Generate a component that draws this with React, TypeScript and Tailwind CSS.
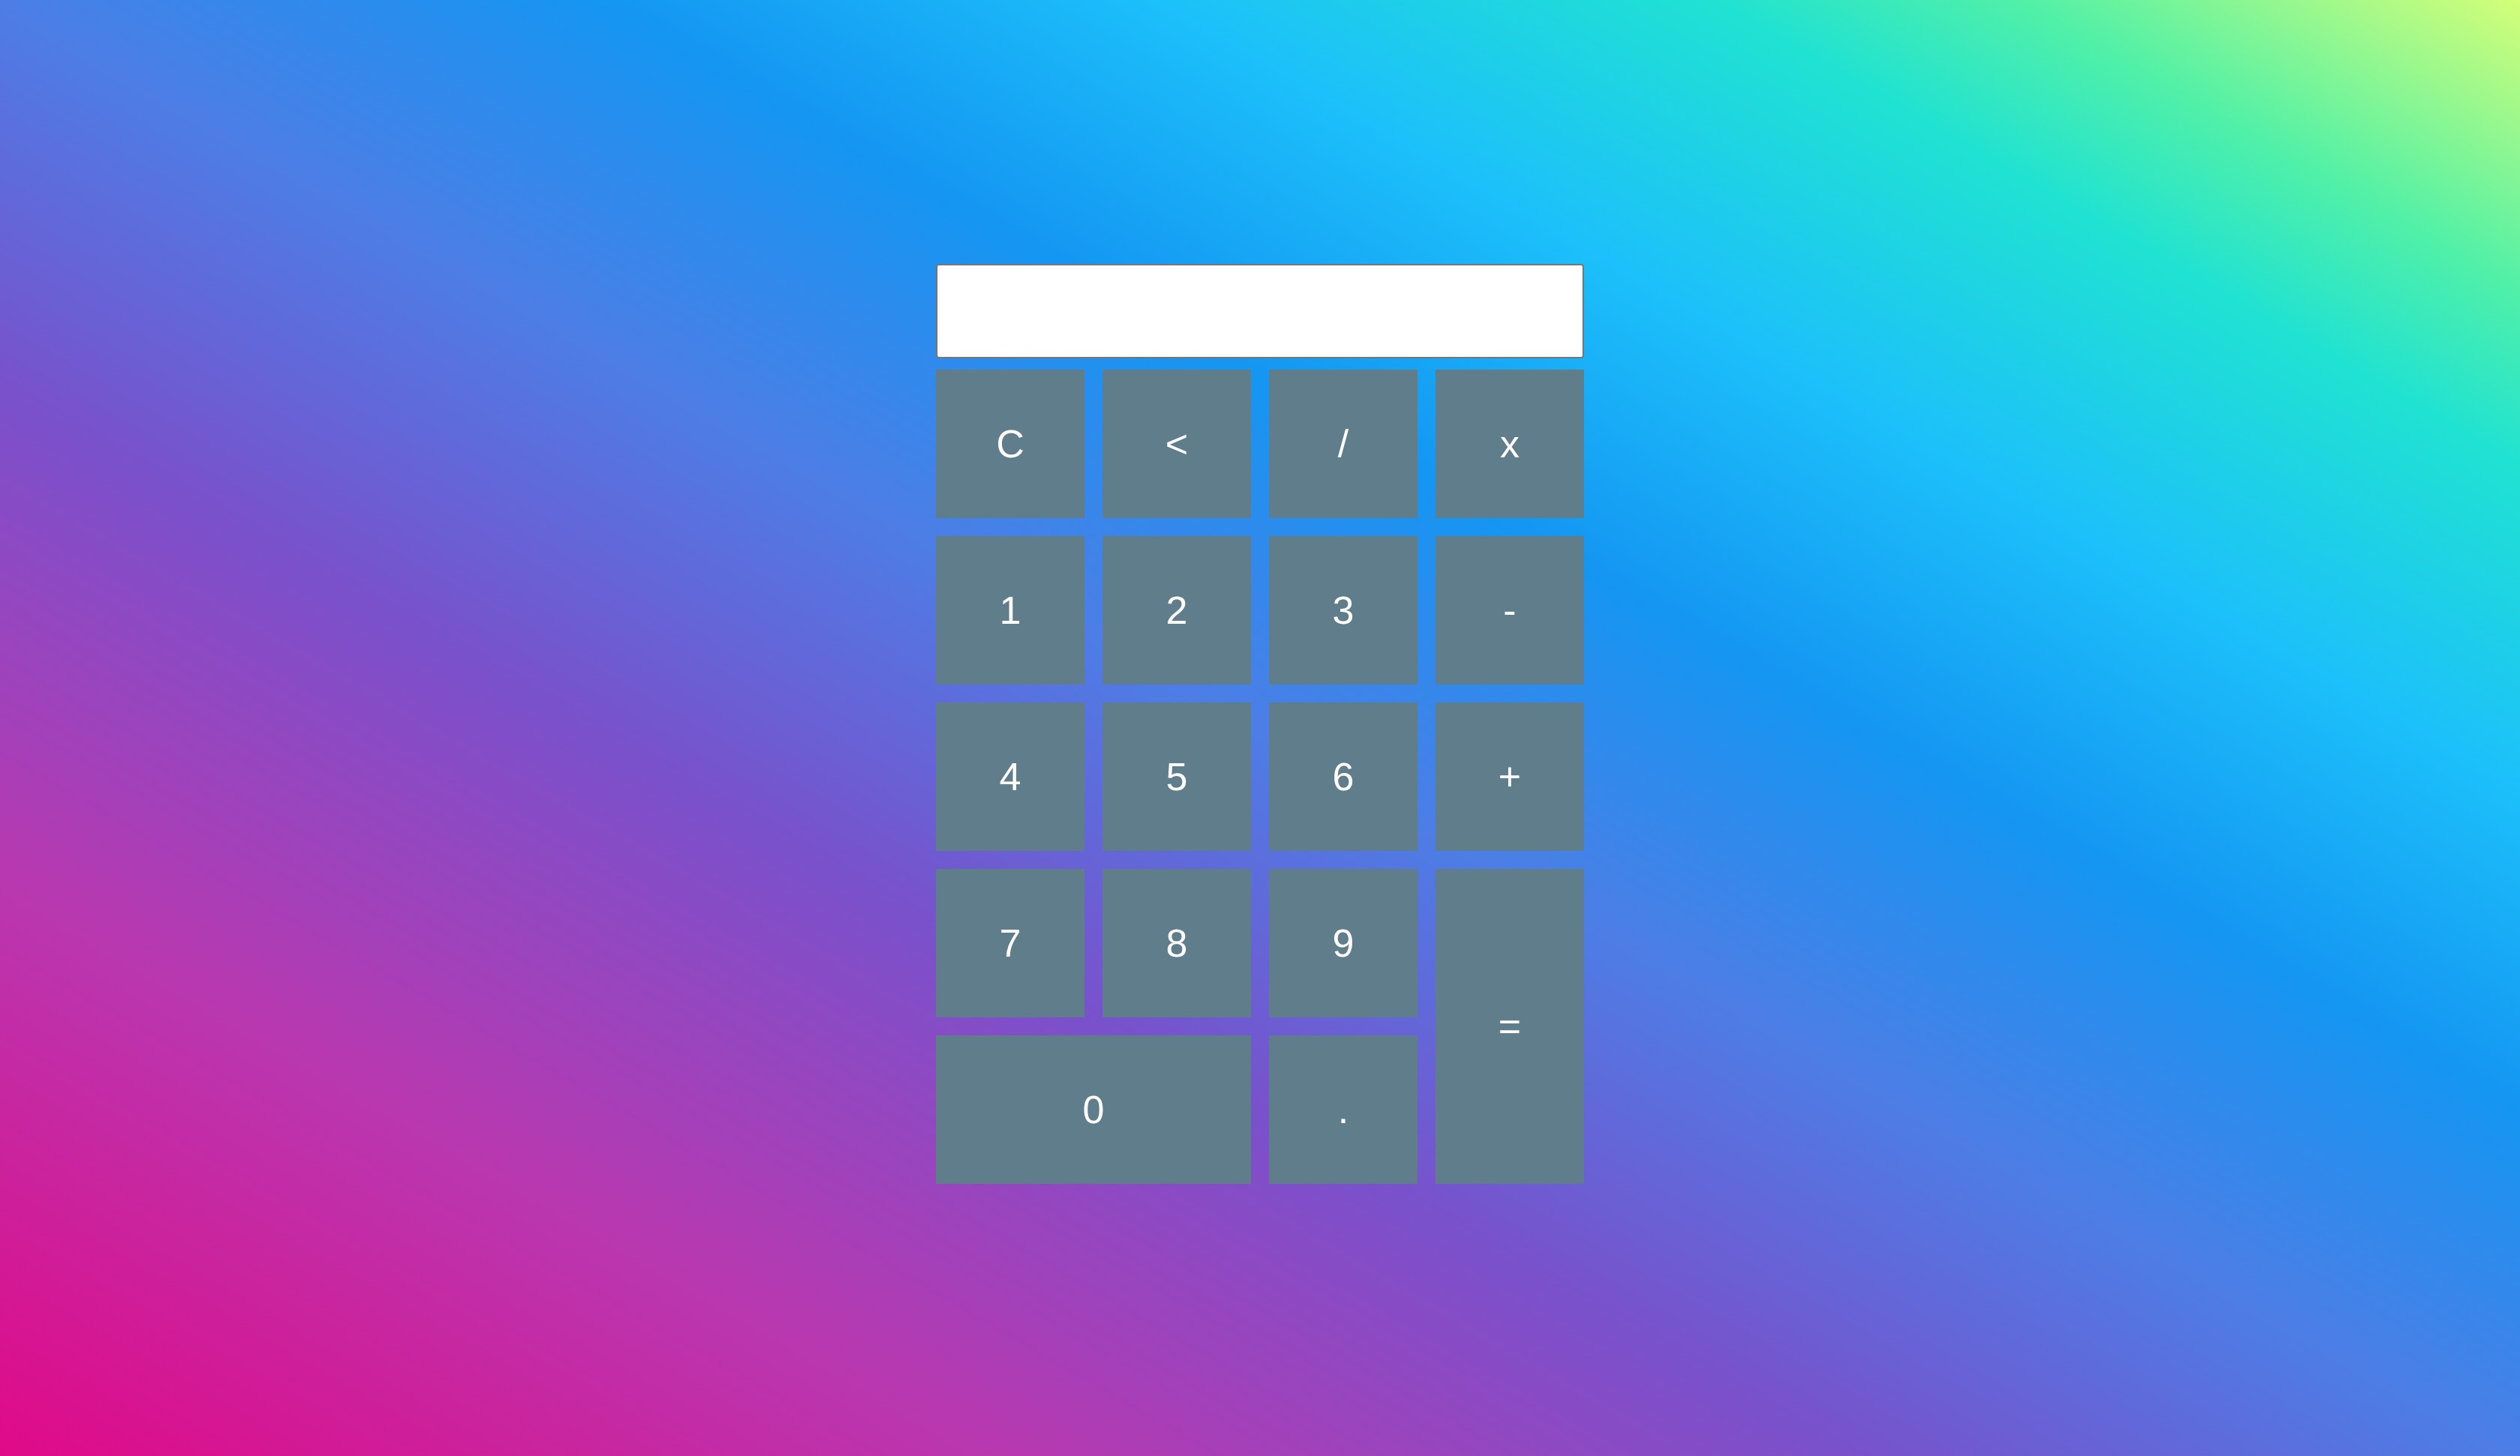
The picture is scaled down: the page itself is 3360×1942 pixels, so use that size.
import { useState } from 'react'

type Key = { label: string; span?: string }

const keys: Key[] = [
    { label: 'C' }, { label: '<' }, { label: '/' }, { label: 'x' },
    { label: '1' }, { label: '2' }, { label: '3' }, { label: '-' },
    { label: '4' }, { label: '5' }, { label: '6' }, { label: '+' },
    { label: '7' }, { label: '8' }, { label: '9' }, { label: '=', span: 'row-span-2' },
    { label: '0', span: 'col-span-2' }, { label: '.' },
]

export default function App(){
    const [value, setValue] = useState('')

    function press(k: string){
        if (k === 'C') return setValue('')
        if (k === '<') return setValue(v => v.slice(0, -1))
        if (k === '=') {
            try {
                // eslint-disable-next-line no-new-func
                const out = Function(`return (${value.replace(/x/g, '*')})`)()
                setValue(String(out))
            } catch { setValue('') }
            return
        }
        setValue(v => v + k)
    }

    return (
        <div className="h-screen w-full overflow-hidden flex justify-center pt-[352px] bg-[linear-gradient(to_top_right,#e00a88_0%,#b838b0_20%,#7852cc_37%,#4c7ee6_50%,#1496f2_62%,#1cc0fa_73%,#20e2d2_84%,#50f0a8_90%,#d4fe78_100%)] font-['Liberation_Sans',Arial,sans-serif]">
            <div className="w-[864px] h-fit flex flex-col">
                <input
                    value={value}
                    readOnly
                    className="block h-[126px] w-full bg-white border-2 border-[#767676] rounded-[4px] px-4 text-[52px] text-right text-black outline-none"
                />
                <div className="mt-[15px] grid grid-cols-[repeat(4,198px)] auto-rows-[198px] gap-[24px]">
                    {keys.map(k => (
                        <button
                            key={k.label}
                            onClick={() => press(k.label)}
                            className={`${k.span ?? ''} bg-[#607d8b] text-white text-[52px] flex items-center justify-center`}
                        >
                            {k.label}
                        </button>
                    ))}
                </div>
            </div>
        </div>
    )
}
